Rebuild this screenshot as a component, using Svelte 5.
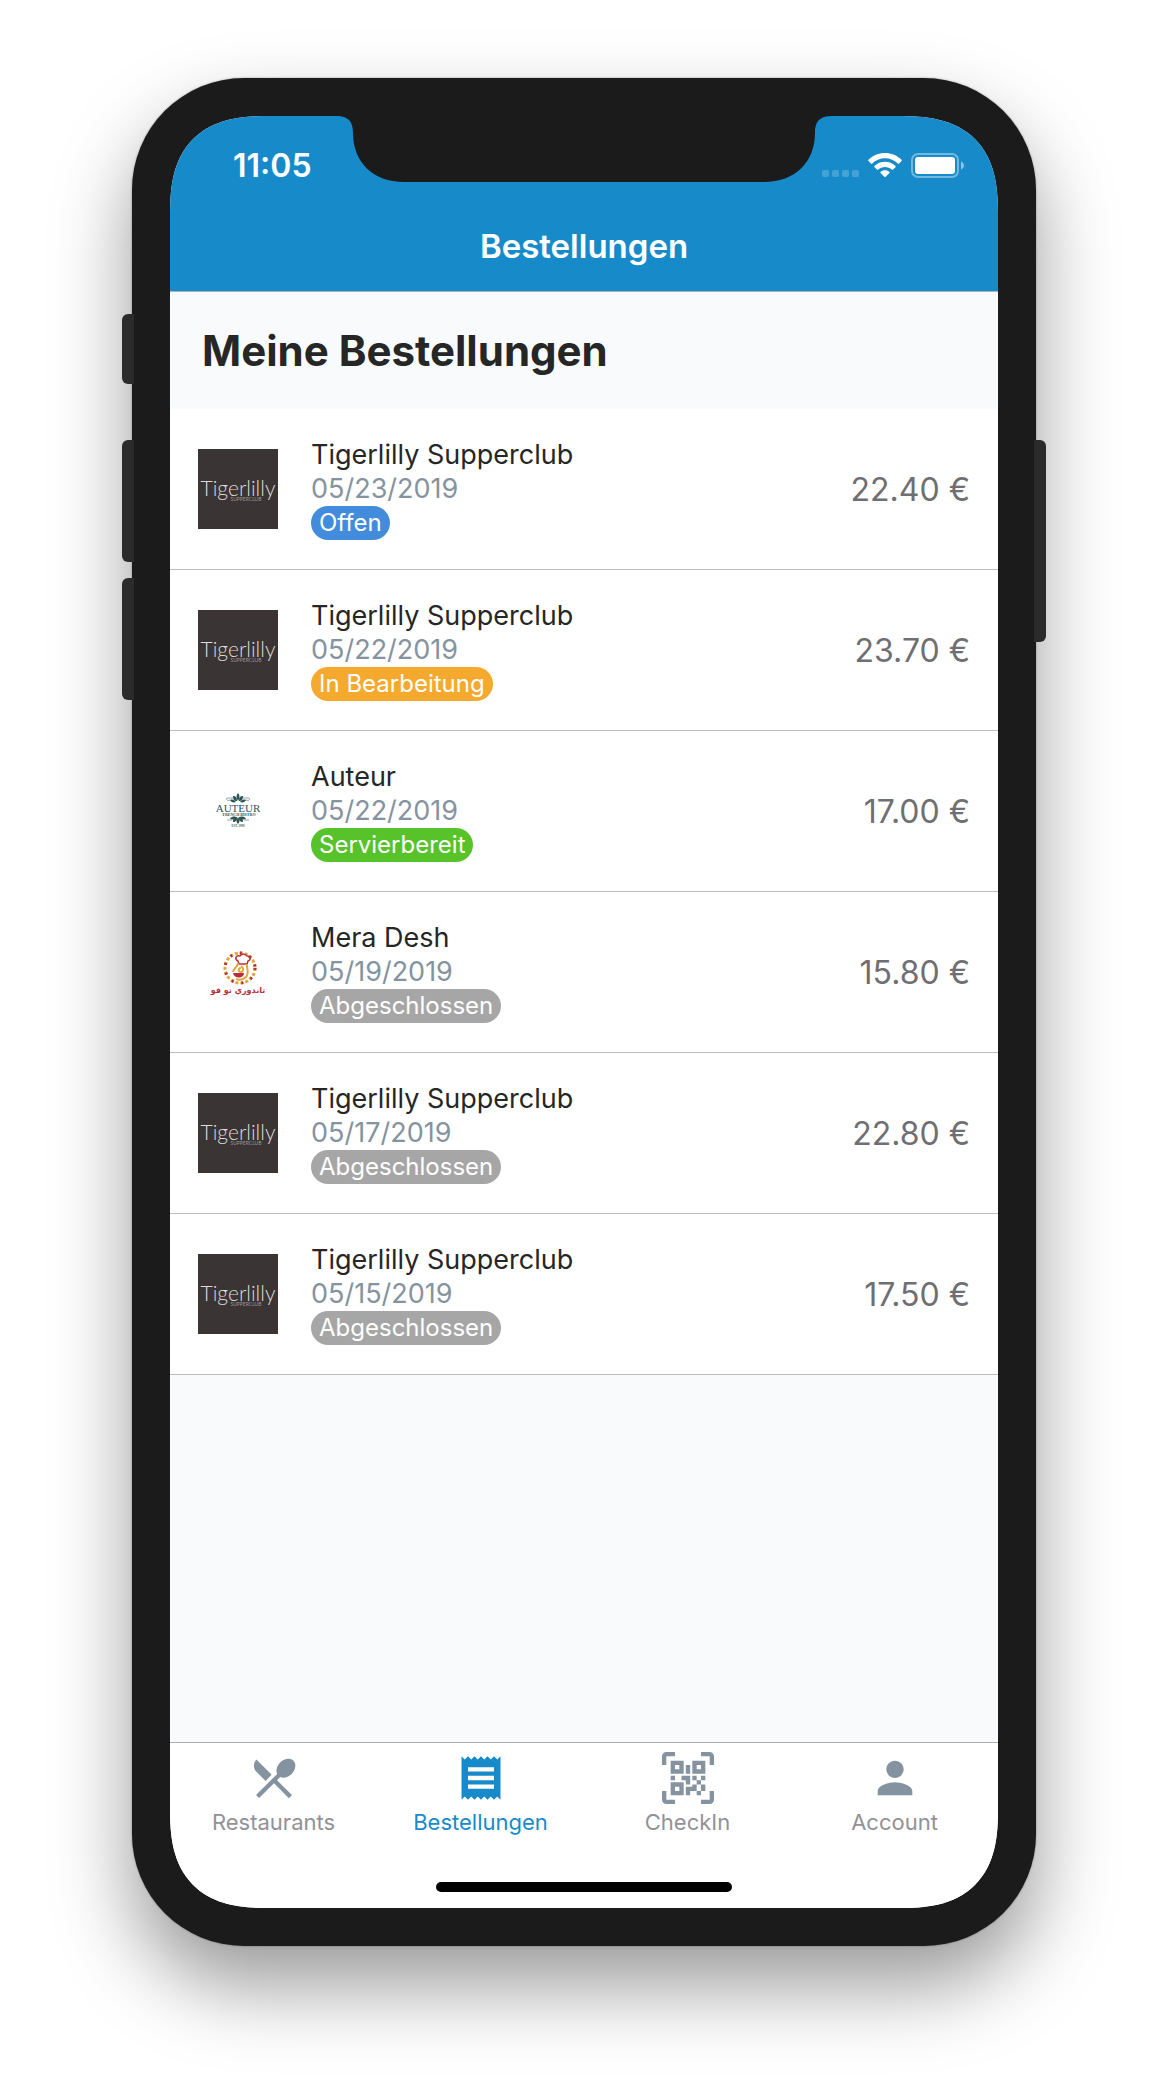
<script>
  const orders = [
    { name: 'Tigerlilly Supperclub', date: '05/23/2019', status: 'Offen', tone: 'open', price: '22.40 €', logo: 'tigerlilly' },
    { name: 'Tigerlilly Supperclub', date: '05/22/2019', status: 'In Bearbeitung', tone: 'progress', price: '23.70 €', logo: 'tigerlilly' },
    { name: 'Auteur', date: '05/22/2019', status: 'Servierbereit', tone: 'ready', price: '17.00 €', logo: 'auteur' },
    { name: 'Mera Desh', date: '05/19/2019', status: 'Abgeschlossen', tone: 'done', price: '15.80 €', logo: 'mera' },
    { name: 'Tigerlilly Supperclub', date: '05/17/2019', status: 'Abgeschlossen', tone: 'done', price: '22.80 €', logo: 'tigerlilly' },
    { name: 'Tigerlilly Supperclub', date: '05/15/2019', status: 'Abgeschlossen', tone: 'done', price: '17.50 €', logo: 'tigerlilly' }
  ];

  const tabs = [
    { label: 'Restaurants', icon: 'M8.1 13.34l2.83-2.83L3.91 3.5c-1.56 1.56-1.56 4.09 0 5.66l4.19 4.18zm6.78-1.81c1.53.71 3.68.21 5.27-1.38 1.91-1.91 2.28-4.65.81-6.12-1.46-1.46-4.2-1.1-6.12.81-1.59 1.59-2.09 3.74-1.38 5.27L3.7 19.87l1.41 1.41L12 14.41l6.88 6.88 1.41-1.41L13.41 13l1.47-1.47z' },
    { label: 'Bestellungen', icon: 'M18 17H6v-2h12v2zm0-4H6v-2h12v2zm0-4H6V7h12v2zM3 22l1.5-1.5L6 22l1.5-1.5L9 22l1.5-1.5L12 22l1.5-1.5L15 22l1.5-1.5L18 22l1.5-1.5L21 22V2l-1.5 1.5L18 2l-1.5 1.5L15 2l-1.5 1.5L12 2l-1.5 1.5L9 2 7.5 3.5 6 2 4.5 3.5 3 2v20z' },
    { label: 'CheckIn', icon: 'M4,4H10V10H4V4M20,4V10H14V4H20M14,15H16V13H14V11H16V13H18V11H20V13H18V15H20V18H18V20H16V18H13V20H11V16H14V15M16,15V18H18V15H16M4,20V14H10V20H4M6,6V8H8V6H6M16,6V8H18V6H16M6,16V18H8V16H6M4,11H6V13H4V11M9,11H13V15H11V13H9V11M11,6H13V10H11V6M2,2V6H0V2A2,2 0 0,1 2,0H6V2H2M22,0A2,2 0 0,1 24,2V6H22V2H18V0H22M2,18V22H6V24H2A2,2 0 0,1 0,22V18H2M22,22V18H24V22A2,2 0 0,1 22,24H18V22H22Z' },
    { label: 'Account', icon: 'M12 12c2.21 0 4-1.79 4-4s-1.79-4-4-4-4 1.79-4 4 1.79 4 4 4zm0 2c-2.67 0-8 1.34-8 4v2h16v-2c0-2.66-5.33-4-8-4z' }
  ];

  let active = $state('Bestellungen');
</script>

<div class="stage">
  <div class="phone">
    <span class="key mute"></span>
    <span class="key volume-up"></span>
    <span class="key volume-down"></span>
    <span class="key power"></span>

    <div class="screen">
      <svg class="notch" viewBox="0 0 498 66" aria-hidden="true">
        <path d="M0 0H498C487 0 480 3 480 17C480 46 460 66 429 66H69C38 66 18 46 18 17C18 3 11 0 0 0Z" />
      </svg>

      <header>
        <div class="status">
          <span class="time">11:05</span>
          <span class="signals">
            <svg class="dots" viewBox="0 0 37 25" aria-hidden="true">
              <rect x="0" y="17" width="7" height="7" rx="2" />
              <rect x="10" y="17" width="7" height="7" rx="2" />
              <rect x="20" y="17" width="7" height="7" rx="2" />
              <rect x="30" y="17" width="7" height="7" rx="2" />
            </svg>
            <svg class="wifi" viewBox="0 0 34 25" aria-hidden="true">
              <path d="M17 0C23.500 0 29.300 2.600 33.500 6.800C33.900 7.200 33.900 7.700 33.500 8.100L31.100 10.500C30.700 10.900 30.200 10.900 29.800 10.500C26.500 7.300 22 5.300 17 5.300S7.500 7.300 4.200 10.500C3.800 10.900 3.300 10.900 2.900 10.500L.5 8.100C.1 7.700 .1 7.200 .5 6.800C4.700 2.600 10.500 0 17 0Z" />
              <path d="M17 8.700C21.100 8.700 24.800 10.300 27.500 12.900C27.900 13.300 27.900 13.800 27.500 14.200L25 16.600C24.600 17 24.200 17 23.800 16.600C22 14.900 19.600 13.900 17 13.900S12 14.900 10.200 16.600C9.800 17 9.400 17 9 16.600L6.500 14.200C6.100 13.800 6.100 13.300 6.500 12.900C9.200 10.300 12.900 8.700 17 8.700Z" />
              <path d="M17 17.200C18.700 17.200 20.300 17.900 21.400 18.900C21.800 19.300 21.800 19.700 21.400 20.100L17.700 23.700C17.300 24.100 16.700 24.100 16.300 23.700L12.600 20.100C12.200 19.700 12.200 19.300 12.600 18.900C13.700 17.900 15.300 17.200 17 17.200Z" />
            </svg>
            <svg class="battery" viewBox="0 0 53 25" aria-hidden="true">
              <rect class="shell" x="1" y="1" width="46" height="23" rx="6" />
              <rect x="4" y="4" width="40" height="17" rx="3" />
              <path class="cap" d="M50 8.500C52 9.500 53 11 53 12.500S52 15.500 50 16.500Z" />
            </svg>
          </span>
        </div>
        <div class="title">Bestellungen</div>
      </header>

      <main>
        <h1>Meine Bestellungen</h1>
        <ul>
          {#each orders as order}
            <li>
              {#if order.logo === 'tigerlilly'}
                <svg class="logo" viewBox="0 0 80 80" aria-hidden="true">
                  <rect width="80" height="80" fill="#3b3434" />
                  <text class="tiger" x="40" y="47" text-anchor="middle">Tigerlilly</text>
                  <text class="club" x="48" y="52" text-anchor="middle">SUPPERCLUB</text>
                </svg>
              {:else if order.logo === 'auteur'}
                <svg class="logo" viewBox="0 0 80 80" aria-hidden="true">
                  <g fill="#2d5354">
                    <path d="M40 22c2 2 2 5 0 8c-2-3-2-6 0-8zM39 30c-3 0-4-2-4-5c3 0 4 2 4 5zM41 30c3 0 4-2 4-5c-3 0-4 2-4 5zM38 31c-3 1-5 0-6-2c3-1 4 0 6 2zM42 31c3 1 5 0 6-2c-3-1-4 0-6 2z" />
                    <path d="M40 53c2-2 2-4 0-7c-2 3-2 5 0 7zM39 46c-3 0-4 2-4 5c3 0 4-2 4-5zM41 46c3 0 4 2 4 5c-3 0-4-2-4-5zM38 46c-3-1-5 0-6 2c3 1 4 0 6-2zM42 46c3-1 5 0 6 2c-3 1-4 0-6-2z" />
                  </g>
                  <path d="M29 27h6M45 27h6M29 27c-2 2 1 3 3 2M51 27c2 2-1 3-3 2M29 49h5M46 49h5" fill="none" stroke="#93a8a8" />
                  <text class="auteur" x="40" y="41" text-anchor="middle">AUTEUR</text>
                  <text class="bistro" x="41" y="45" text-anchor="middle">FRENCH BISTRO</text>
                  <text class="est" x="40" y="56" text-anchor="middle">EST. 1998</text>
                </svg>
              {:else}
                <svg class="logo" viewBox="0 0 80 80" aria-hidden="true">
                  <g fill="none">
                    <circle cx="42" cy="36" r="15" stroke="#e3a63c" stroke-width="3" stroke-dasharray="3 2" />
                    <circle cx="42" cy="36" r="15" stroke="#b5303a" stroke-width="3" stroke-dasharray="2 8" />
                    <path d="M40 29c-4-2-2-6 2-5c2-3 6-2 7 0c4 0 4 4 1 5l-1 3h-8z" stroke="#b5303a" stroke-width="1.500" />
                    <path d="M40 31c0 4-5 6-5 9M49 32c-1 3 3 8-1 13c-3 3-7 3-10 2M43 34c3 2 3 5 0 6c-3 0-3-4 0-4" stroke="#e3a63c" stroke-width="2" />
                  </g>
                  <path d="M35 41h11c0 6-10 6-11 0z" fill="#b5303a" />
                  <text class="arabic" x="40" y="61" text-anchor="middle">تاندوري تو قو</text>
                </svg>
              {/if}
              <div class="info">
                <span class="name">{order.name}</span>
                <span class="date">{order.date}</span>
                <span class="badge {order.tone}">{order.status}</span>
              </div>
              <span class="price">{order.price}</span>
            </li>
          {/each}
        </ul>
      </main>

      <footer>
        <nav>
          {#each tabs as tab}
            <button class:active={active === tab.label} onclick={() => (active = tab.label)}>
              <svg viewBox="0 0 24 24" aria-hidden="true"><path fill-rule="evenodd" d={tab.icon} /></svg>
              <span>{tab.label}</span>
            </button>
          {/each}
        </nav>
        <div class="home"></div>
      </footer>
    </div>
  </div>
</div>

<style>
  :global(body) {
    margin: 0;
    background: #fff;
  }
  .stage {
    box-sizing: border-box;
    display: flex;
    min-height: 100vh;
    padding: 78px 132px 150px;
    font-family: Inter, "Liberation Sans", sans-serif;
    color: #262626;
    overflow: hidden;
  }
  .phone {
    position: relative;
    display: flex;
    flex: 1;
    padding: 38px;
    border-radius: 112px;
    background: #1b1b1b;
    box-shadow: 0 0 2px rgba(0, 0, 0, 0.4), 0 40px 80px rgba(0, 0, 0, 0.4);
  }
  .key {
    position: absolute;
    left: -10px;
    width: 12px;
    border-radius: 6px 0 0 6px;
    background: #2b2b2b;
  }
  .mute { top: 236px; height: 70px; }
  .volume-up { top: 362px; height: 122px; }
  .volume-down { top: 500px; height: 122px; }
  .power {
    top: 362px;
    right: -10px;
    left: auto;
    height: 202px;
    border-radius: 0 6px 6px 0;
  }
  .screen {
    position: relative;
    display: flex;
    flex: 1;
    flex-direction: column;
    overflow: hidden;
    border-radius: 84px;
    background: #f8fafc;
  }
  @supports (corner-shape: superellipse(1.4)) {
    .screen {
      border-radius: 100px;
      corner-shape: superellipse(1.4);
    }
  }
  .notch {
    position: absolute;
    top: 0;
    left: 50%;
    width: 498px;
    margin-left: -249px;
    fill: #1b1b1b;
  }
  header {
    border-bottom: 1px solid #a9b3ba;
    background: #178bca;
    color: #fff;
  }
  .status {
    box-sizing: border-box;
    display: flex;
    justify-content: space-between;
    align-items: center;
    height: 98px;
    padding: 0 34px 0 63px;
  }
  .time {
    font-size: 32px;
    font-weight: 600;
  }
  .signals {
    display: flex;
    gap: 9px;
    fill: #fff;
  }
  .signals svg { height: 25px; }
  .dots { opacity: 0.2; }
  .shell {
    fill: none;
    stroke: #fff;
    stroke-width: 2;
    opacity: 0.4;
  }
  .cap { opacity: 0.5; }
  .title {
    padding: 4px 0 16px;
    font-size: 33px;
    font-weight: 600;
    line-height: 57px;
    text-align: center;
  }
  h1 {
    margin: 0;
    padding: 31px 32px 30px;
    font-size: 42px;
    font-weight: 700;
    line-height: 56px;
  }
  ul {
    margin: 0;
    padding: 0;
    list-style: none;
  }
  main { flex: 1; }
  li {
    display: flex;
    align-items: center;
    padding: 29px 28px;
    border-bottom: 1px solid #bcbcbf;
    background: #fff;
  }
  .logo {
    width: 80px;
    height: 80px;
    margin-right: 33px;
  }
  .tiger { font: 300 21px Lato, sans-serif; fill: #dedbd9; }
  .club { font: 400 5px Lato, sans-serif; fill: #9b9693; }
  .auteur { font: 400 11px "Liberation Serif", serif; fill: #2d5354; }
  .bistro { font: 700 4px "Liberation Serif", serif; fill: #2d5354; }
  .est { font: 700 3px "Liberation Serif", serif; fill: #3d5f60; }
  .arabic { font: 700 8px "DejaVu Sans", sans-serif; fill: #b5303a; }
  .info {
    display: flex;
    flex: 1;
    flex-direction: column;
    align-items: flex-start;
    font-size: 27px;
    line-height: 34px;
  }
  .date { color: #8593a0; }
  .badge {
    padding: 0 8px;
    border-radius: 17px;
    color: #fff;
    font-size: 24px;
  }
  .open { background: #438cdb; }
  .progress { background: #f5a92f; }
  .ready { background: #58c22b; }
  .done { background: #a6a6a6; }
  .price {
    color: #6f6f73;
    font-size: 32px;
  }
  footer {
    border-top: 1px solid #adadb0;
    background: #fff;
  }
  nav { display: grid; grid-template-columns: repeat(4, 1fr); }
  button {
    display: flex;
    flex-direction: column;
    align-items: center;
    padding: 9px 0 0;
    border: 0;
    background: none;
    color: #929296;
    font: inherit;
    font-size: 22px;
    line-height: 36px;
    cursor: pointer;
  }
  button svg {
    width: 52px;
    height: 52px;
    fill: #8593a0;
  }
  button.active { color: #178bca; }
  button.active svg { fill: #178bca; }
  .home {
    width: 296px;
    height: 10px;
    margin: 42px auto 16px;
    border-radius: 5px;
    background: #000;
  }
</style>
